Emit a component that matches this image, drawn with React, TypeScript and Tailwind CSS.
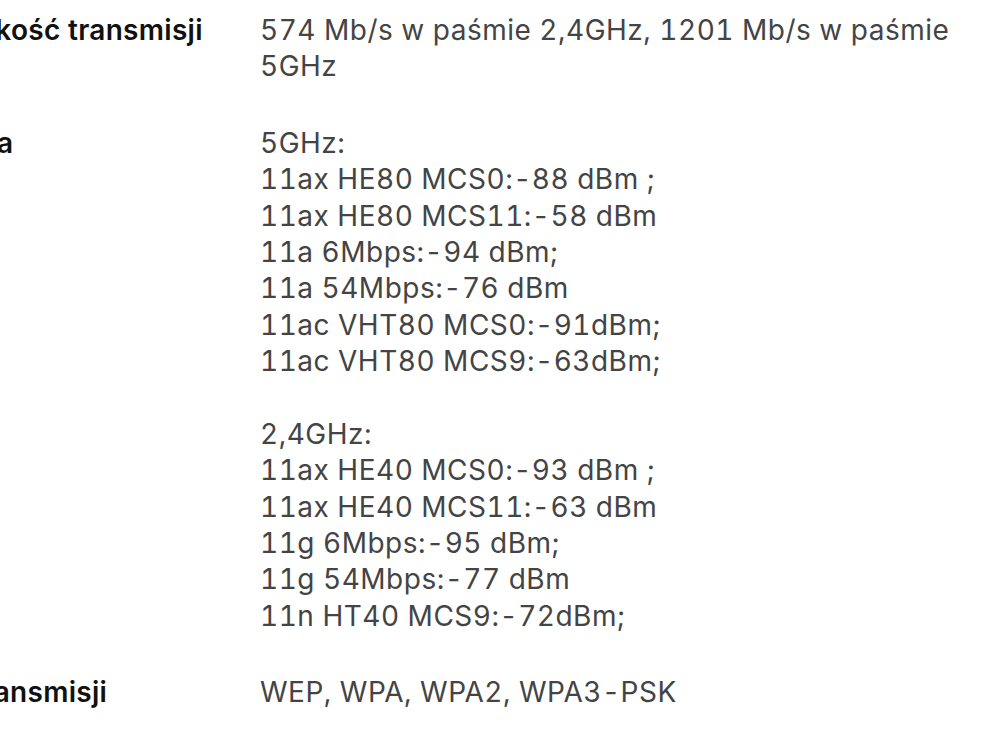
export default function App() {
  const rows: { label: string; lines: string[] }[] = [
    { label: "Maksymalna szybkość transmisji", lines: ["574 Mb/s w paśmie 2,4GHz, 1201 Mb/s w paśmie", "5GHz"] },
    {
      label: "Czułość odbiornika",
      lines: [
        "5GHz:",
        "11ax HE80 MCS0:-88 dBm ;",
        "11ax HE80 MCS11:-58 dBm",
        "11a 6Mbps:-94 dBm;",
        "11a 54Mbps:-76 dBm",
        "11ac VHT80 MCS0:-91dBm;",
        "11ac VHT80 MCS9:-63dBm;",
        "",
        "2,4GHz:",
        "11ax HE40 MCS0:-93 dBm ;",
        "11ax HE40 MCS11:-63 dBm",
        "11g 6Mbps:-95 dBm;",
        "11g 54Mbps:-77 dBm",
        "11n HT40 MCS9:-72dBm;",
      ],
    },
    { label: "Zabezpieczenie transmisji", lines: ["WEP, WPA, WPA2, WPA3-PSK"] },
  ];
  return (
    <div className="w-[999px] h-[734px] overflow-hidden bg-white" style={{ fontFamily: "Inter, 'Liberation Sans', sans-serif" }}>
      <div className="flex flex-col gap-[40px] pt-[12px] ml-[-253px]">
        {rows.map((r) => (
          <div key={r.label} className="flex">
            <div className="w-[513px] shrink-0 text-[28px] leading-[36.4px] font-semibold text-[#111] whitespace-nowrap tracking-[0.3px]">{r.label}</div>
            <div className="text-[28px] leading-[36.4px] text-[#444] tabular-nums tracking-[0.5px]">
              {r.lines.map((l, i) => (
                <div key={i} className="h-[36.4px] whitespace-nowrap">{l}</div>
              ))}
            </div>
          </div>
        ))}
      </div>
    </div>
  );
}
